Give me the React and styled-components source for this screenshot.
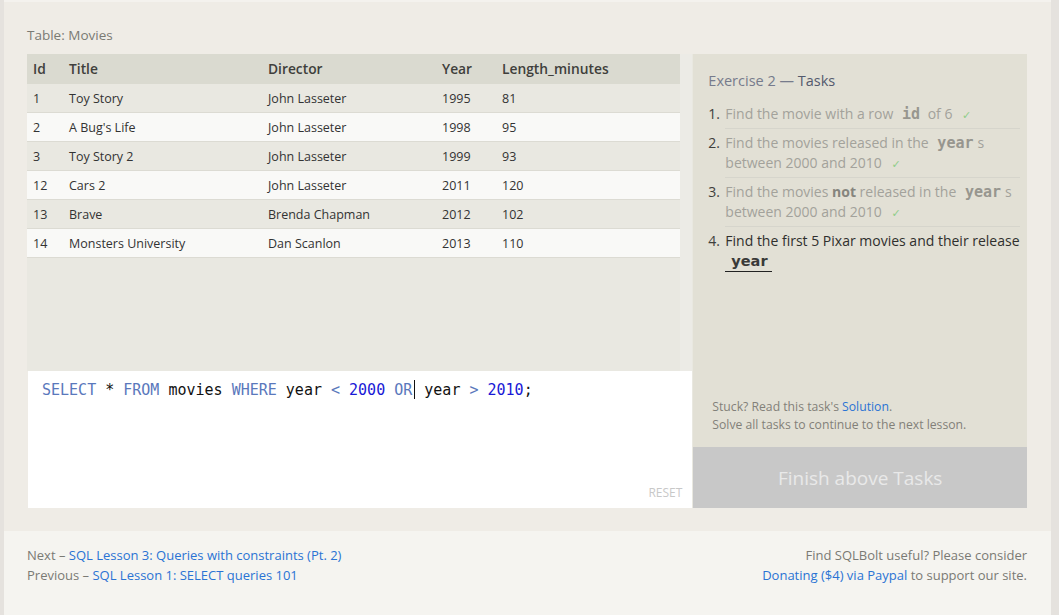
import React from 'react';
import styled, { createGlobalStyle } from 'styled-components';

const GlobalStyle = createGlobalStyle`
  html, body {
    margin: 0;
    padding: 0;
    background: #e5e2de;
    font-family: 'Open Sans', 'DejaVu Sans', sans-serif;
  }
`;

const movies = [
    { id: 1, title: 'Toy Story', director: 'John Lasseter', year: 1995, length: 81 },
    { id: 2, title: "A Bug's Life", director: 'John Lasseter', year: 1998, length: 95 },
    { id: 3, title: 'Toy Story 2', director: 'John Lasseter', year: 1999, length: 93 },
    { id: 12, title: 'Cars 2', director: 'John Lasseter', year: 2011, length: 120 },
    { id: 13, title: 'Brave', director: 'Brenda Chapman', year: 2012, length: 102 },
    { id: 14, title: 'Monsters University', director: 'Dan Scanlon', year: 2013, length: 110 },
];

const App = () => {
    return (
        <>
            <GlobalStyle />
            <Page>
                <Main>
                    <TableLabel>Table: Movies</TableLabel>
                    <Workspace>
                        <LeftColumn>
                            <TableScroll>
                                <TableArea>
                                    <Table>
                                        <colgroup>
                                            <col style={{ width: 36 }} />
                                            <col style={{ width: 199 }} />
                                            <col style={{ width: 174 }} />
                                            <col style={{ width: 60 }} />
                                            <col />
                                        </colgroup>
                                        <thead>
                                            <tr>
                                                <Th>Id</Th>
                                                <Th>Title</Th>
                                                <Th>Director</Th>
                                                <Th>Year</Th>
                                                <Th>Length_minutes</Th>
                                            </tr>
                                        </thead>
                                        <tbody>
                                            {movies.map((m, i) => (
                                                <Row key={m.id} light={i % 2 === 1}>
                                                    <Td>{m.id}</Td>
                                                    <Td>{m.title}</Td>
                                                    <Td>{m.director}</Td>
                                                    <Td>{m.year}</Td>
                                                    <Td>{m.length}</Td>
                                                </Row>
                                            ))}
                                        </tbody>
                                    </Table>
                                </TableArea>
                                <ScrollGutter />
                            </TableScroll>
                            <Editor>
                                <Code>
                                    <Kw>SELECT</Kw> * <Kw>FROM</Kw> movies <Kw>WHERE</Kw> year <Kw>&lt;</Kw> <Num>2000</Num> <Kw>OR</Kw><Caret /> year <Kw>&gt;</Kw> <Num>2010</Num>;
                                </Code>
                                <Reset>RESET</Reset>
                            </Editor>
                        </LeftColumn>
                        <TaskPanel>
                            <TaskBody>
                                <TaskTitle>Exercise 2 — <strong>Tasks</strong></TaskTitle>
                                <TaskList>
                                    <Task>
                                        <TaskNum first>1.</TaskNum>
                                        <TaskText first done>
                                            Find the movie with a row <Mono>id</Mono> of 6 <Check>✓</Check>
                                        </TaskText>
                                    </Task>
                                    <Task>
                                        <TaskNum>2.</TaskNum>
                                        <TaskText done>
                                            Find the movies released in the <Mono>year</Mono>s between 2000 and 2010 <Check>✓</Check>
                                        </TaskText>
                                    </Task>
                                    <Task>
                                        <TaskNum>3.</TaskNum>
                                        <TaskText done>
                                            Find the movies <Strong>not</Strong> released in the <Mono>year</Mono>s between 2000 and 2010 <Check>✓</Check>
                                        </TaskText>
                                    </Task>
                                    <Task>
                                        <TaskNum>4.</TaskNum>
                                        <TaskText>
                                            Find the first 5 Pixar movies and their release <CurrentCode>year</CurrentCode>
                                        </TaskText>
                                    </Task>
                                </TaskList>
                                <Hint>
                                    Stuck? Read this task's <A href="#">Solution</A>.<br />
                                    Solve all tasks to continue to the next lesson.
                                </Hint>
                            </TaskBody>
                            <FinishButton>Finish above Tasks</FinishButton>
                        </TaskPanel>
                    </Workspace>
                </Main>
                <Footer>
                    <FooterCol>
                        <div>Next – <A href="#">SQL Lesson 3: Queries with constraints (Pt. 2)</A></div>
                        <div>Previous – <A href="#">SQL Lesson 1: SELECT queries 101</A></div>
                    </FooterCol>
                    <FooterCol right>
                        <div>Find SQLBolt useful? Please consider</div>
                        <div><A href="#">Donating ($4) via Paypal</A> to support our site.</div>
                    </FooterCol>
                </Footer>
            </Page>
        </>
    )
}

const Page = styled.div`
    width: 1047px;
    margin-left: 4px;
    min-height: 615px;
    background: #f5f4f0;
    display: flex;
    flex-direction: column;
`

const Main = styled.div`
    background: #efece6;
    border-top: 2px solid #f4f2ee;
    padding: 24px 24px 23px 23px;
`

const TableLabel = styled.div`
    font-size: 13.5px;
    color: #7a7a74;
    height: 28px;
    line-height: 19px;
`

const Workspace = styled.div`
    display: flex;
    height: 454px;
`

const LeftColumn = styled.div`
    width: 666px;
    display: flex;
    flex-direction: column;
`

const TableScroll = styled.div`
    display: flex;
    height: 317px;
`

const TableArea = styled.div`
    flex: 1;
    background: #e9e8e1;
`

const ScrollGutter = styled.div`
    width: 12px;
    background: #ecebe6;
`

const Table = styled.table`
    width: 100%;
    table-layout: fixed;
    border-collapse: collapse;
    font-size: 12.5px;
    color: #333;
`

const Th = styled.th`
    height: 28px;
    padding: 0 0 2px 6px;
    text-align: left;
    font-size: 13.8px;
    font-weight: 600;
    color: #3f3f3c;
    background: #dadad0;
`

const Row = styled.tr`
    background: ${p => (p.light ? '#f9f9f7' : '#e9e8e1')};
    border-bottom: 1px solid #dcdbd3;
`

const Td = styled.td`
    height: 27px;
    padding: 1px 0 0 6px;
`

const Editor = styled.div`
    flex: 1;
    background: #fff;
    margin-left: 1px;
    position: relative;
    padding: 9px 14px;
`

const Code = styled.div`
    font-family: 'DejaVu Sans Mono', monospace;
    font-size: 15px;
    color: #111;
    white-space: pre;
`

const Kw = styled.span`
    color: #5a78bc;
`

const Num = styled.span`
    color: #1919d6;
`

const Caret = styled.span`
    display: inline-block;
    width: 1px;
    height: 19px;
    margin-left: 2px;
    vertical-align: -4px;
    background: #111;
`

const Reset = styled.div`
    position: absolute;
    right: 10px;
    bottom: 7px;
    font-size: 12px;
    color: #c8c8c8;
`

const TaskPanel = styled.div`
    width: 334px;
    display: flex;
    flex-direction: column;
    background: #e2e0d5;
    border-left: 1px solid #e9e8e0;
`

const TaskBody = styled.div`
    flex: 1;
    padding: 17px 4px 13px 15px;
    display: flex;
    flex-direction: column;
`

const TaskTitle = styled.div`
    font-size: 14.5px;
    color: #767b8c;
    margin-bottom: 10px;
    strong {
        font-weight: normal;
        color: #545a6d;
    }
`

const TaskList = styled.ol`
    list-style: none;
    margin: 0;
    padding: 0;
    flex: 1;
`

const Task = styled.li`
    display: flex;
    align-items: flex-start;
    font-size: 14px;
    line-height: 20px;
`

const TaskNum = styled.span`
    width: 17px;
    flex-shrink: 0;
    color: #3f3f3c;
    padding-top: ${p => (p.first ? '4px' : '5px')};
`

const TaskText = styled.div`
    flex: 1;
    margin-right: 3px;
    padding: 4px 0 3px;
    border-top: ${p => (p.first ? 'none' : '1px solid #d6d5cc')};
    color: ${p => (p.done ? '#a3a29b' : '#2f2f2d')};
`

const Mono = styled.code`
    font-family: 'DejaVu Sans Mono', monospace;
    font-weight: bold;
    font-size: 15px;
    line-height: 1;
    color: #97968f;
    margin: 0 4px 0 5px;
`

const Strong = styled.b`
    color: #86857e;
`

const CurrentCode = styled.code`
    display: inline-block;
    font-family: 'DejaVu Sans', sans-serif;
    font-weight: bold;
    font-size: 14.5px;
    color: #3a3a38;
    padding: 0 4px 0 6px;
    line-height: 20px;
    border-bottom: 1px solid #222;
`

const Check = styled.span`
    color: #8fce8a;
    font-size: 11px;
    margin-left: 6px;
`

const Hint = styled.div`
    font-size: 12.2px;
    line-height: 18px;
    color: #828079;
    padding-left: 4px;
`

const A = styled.a`
    color: #2a73d4;
    text-decoration: none;
`

const FinishButton = styled.div`
    height: 61px;
    background: #c8c8c8;
    color: #e9e9e9;
    font-size: 19px;
    display: flex;
    align-items: center;
    justify-content: center;
`

const Footer = styled.div`
    display: flex;
    justify-content: space-between;
    padding: 14px 24px 0 23px;
    font-size: 13px;
    line-height: 20px;
    color: #7a7a74;
`

const FooterCol = styled.div`
    text-align: ${p => (p.right ? 'right' : 'left')};
`

export default App;
